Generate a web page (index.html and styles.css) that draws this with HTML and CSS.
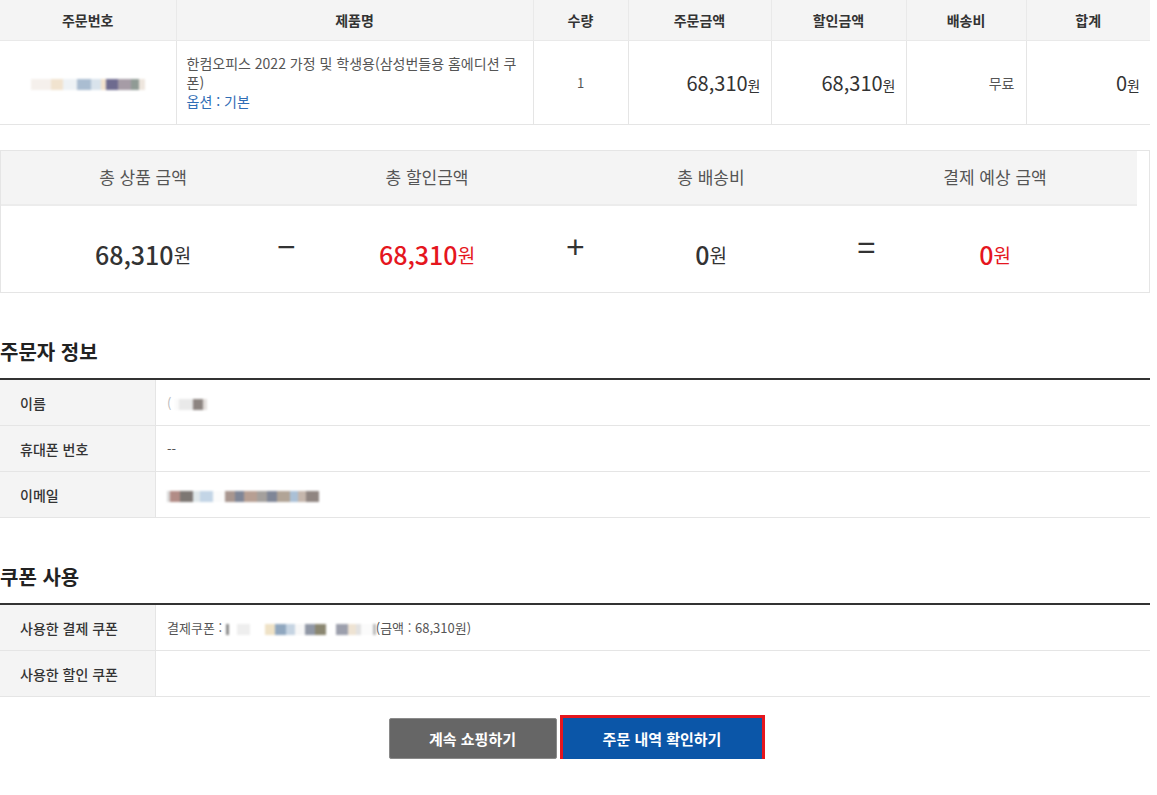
FILE: index.html
```html
<!DOCTYPE html>
<html lang="ko">
<head>
    <meta charset="UTF-8">
    <meta name="viewport" content="width=device-width, initial-scale=1.0">
    <title>주문 완료</title>
    <link rel="stylesheet" href="styles.css">
</head>
<body>
    <div class="wrap">
        <table class="order-table">
            <colgroup>
                <col style="width:176px">
                <col style="width:357px">
                <col style="width:95px">
                <col style="width:143px">
                <col style="width:135px">
                <col style="width:120px">
                <col>
            </colgroup>
            <thead>
                <tr>
                    <th>주문번호</th>
                    <th>제품명</th>
                    <th>수량</th>
                    <th>주문금액</th>
                    <th>할인금액</th>
                    <th>배송비</th>
                    <th>합계</th>
                </tr>
            </thead>
            <tbody>
                <tr>
                    <td class="ord-no">
                        <span class="mosaic"><i style="width:20px;background:#f5f0ec"></i><i style="width:12px;background:#f1e3cf"></i><i style="width:14px;background:#eef2f5"></i><i style="width:14px;background:#aabdd1"></i><i style="width:10px;background:#d9e3ec"></i><i style="width:5px;background:#f2e2cc"></i><i style="width:12px;background:#6e6b8f"></i><i style="width:13px;background:#a69ca6"></i><i style="width:8px;background:#909b95"></i><i style="width:6px;background:#eee6de"></i></span>
                    </td>
                    <td class="prd">
                        한컴오피스 2022 가정 및 학생용(삼성번들용 홈에디션 쿠폰)
                        <span class="opt">옵션 : 기본</span>
                    </td>
                    <td class="qty">1</td>
                    <td class="price">68,310<span class="won">원</span></td>
                    <td class="price">68,310<span class="won">원</span></td>
                    <td class="ship">무료</td>
                    <td class="price">0<span class="won">원</span></td>
                </tr>
            </tbody>
        </table>

        <div class="summary">
            <div class="sum-head">
                <div>총 상품 금액</div>
                <div>총 할인금액</div>
                <div>총 배송비</div>
                <div>결제 예상 금액</div>
            </div>
            <div class="sum-body">
                <div class="sum-val">68,310<span class="won">원</span></div>
                <div class="sum-val red"><span class="op op-minus">−</span>68,310<span class="won">원</span></div>
                <div class="sum-val"><span class="op op-plus">+</span>0<span class="won">원</span></div>
                <div class="sum-val red"><span class="op op-eq">=</span>0<span class="won">원</span></div>
            </div>
        </div>

        <h3 class="sec-title">주문자 정보</h3>
        <table class="info-table">
            <tr>
                <th>이름</th>
                <td><span class="faint">(</span> <span class="mosaic"><i style="width:4px;background:#fafafa"></i><i style="width:14px;background:#e9e9e9"></i><i style="width:10px;background:#8d8581"></i><i style="width:4px;background:#e4e0dd"></i></span></td>
            </tr>
            <tr>
                <th>휴대폰 번호</th>
                <td>--</td>
            </tr>
            <tr>
                <th>이메일</th>
                <td><span class="mosaic"><i style="width:3px;background:#d8d8d8"></i><i style="width:10px;background:#b28c86"></i><i style="width:13px;background:#7d7773"></i><i style="width:7px;background:#dfe7ea"></i><i style="width:13px;background:#c3d5e6"></i><i style="width:12px;background:#fbfbfb"></i><i style="width:10px;background:#a8968f"></i><i style="width:9px;background:#7f8697"></i><i style="width:13px;background:#b79f93"></i><i style="width:10px;background:#a4a09d"></i><i style="width:10px;background:#7f8697"></i><i style="width:13px;background:#b1a496"></i><i style="width:8px;background:#aac0d6"></i><i style="width:8px;background:#c5b6ac"></i><i style="width:13px;background:#908581"></i></span></td>
            </tr>
        </table>

        <h3 class="sec-title">쿠폰 사용</h3>
        <table class="info-table">
            <tr>
                <th>사용한 결제 쿠폰</th>
                <td>결제쿠폰 : <span class="mosaic"><i style="width:3px;background:#8a8a8a"></i><i style="width:8px;background:#fff"></i><i style="width:13px;background:#eeeeee"></i><i style="width:15px;background:#fff"></i><i style="width:10px;background:#efe2c6"></i><i style="width:11px;background:#90a7bf"></i><i style="width:9px;background:#c6d4e2"></i><i style="width:10px;background:#f7f7f7"></i><i style="width:10px;background:#9097a5"></i><i style="width:11px;background:#8b8771"></i><i style="width:10px;background:#fff"></i><i style="width:12px;background:#9c9fac"></i><i style="width:8px;background:#eee3d3"></i><i style="width:5px;background:#e2e2e2"></i><i style="width:12px;background:#fbfbfb"></i><i style="width:3px;background:#bbb"></i></span>(금액 : 68,310원)</td>
            </tr>
            <tr>
                <th>사용한 할인 쿠폰</th>
                <td></td>
            </tr>
        </table>

        <div class="btns">
            <button class="btn btn-gray">계속 쇼핑하기</button>
            <button class="btn btn-blue">주문 내역 확인하기</button>
        </div>
    </div>
</body>
</html>
```

FILE: styles.css
```css
body { margin: 0; background: #fff; font-family: "Noto Sans CJK KR", "Liberation Sans", sans-serif; color: #333; }
.wrap { width: 1150px; }

.order-table { width: 1150px; border-collapse: collapse; table-layout: fixed; }
.order-table th { height: 40px; padding: 0; background: #f4f4f4; font-size: 14px; font-weight: 700; color: #333; border-left: 1px solid #e9e9e9; border-bottom: 1px solid #e9e9e9; }
.order-table td { height: 83px; padding: 0 10px; border-left: 1px solid #e5e5e5; border-bottom: 1px solid #e5e5e5; font-size: 14px; color: #555; }
.order-table th:first-child, .order-table td:first-child { border-left: 0; }
.order-table .ord-no { text-align: center; padding: 0; }
.order-table .prd { padding: 0 12px 0 10px; font-size: 14px; line-height: 19px; color: #555; word-break: break-all; }
.opt { display: block; color: #2f6db5; }
.order-table .qty { text-align: center; font-size: 13px; }
.order-table .price { text-align: right; font-size: 20px; color: #333; }
.order-table .ship { text-align: right; font-size: 14px; padding-right: 11px; }
.won { font-size: 14px; }

.mosaic { display: inline-flex; vertical-align: middle; height: 11px; filter: blur(0.8px); }
.mosaic i { display: block; height: 100%; }
.faint { color: #bbb; }

.summary { margin-top: 25px; border: 1px solid #e5e5e5; padding-right: 12px; }
.sum-head { display: grid; grid-template-columns: repeat(4, 1fr); height: 53px; background: #f4f4f4; border-bottom: 2px solid #ececec; }
.sum-head div { display: flex; align-items: center; justify-content: center; font-size: 17px; color: #555; padding-bottom: 2px; }
.sum-body { display: grid; grid-template-columns: repeat(4, 1fr); height: 86px; }
.sum-val { position: relative; display: flex; align-items: center; justify-content: center; padding-top: 10px; font-size: 25px; font-weight: 500; color: #333; }
.sum-val .won { font-size: 19px; font-weight: 400; }
.sum-val.red { color: #e5161e; }
.op { position: absolute; top: 24px; font-family: "Liberation Sans", sans-serif; font-size: 32px; font-weight: 400; line-height: 34px; color: #333; }
.op-minus { left: -8px; }
.op-plus { left: -3px; }
.op-eq { left: 4px; }

.sec-title { margin: 46px 0 13px; font-size: 20px; font-weight: 700; line-height: 26px; color: #222; }
.info-table { width: 1150px; border-collapse: collapse; border-top: 2px solid #333; }
.info-table th { width: 135px; height: 45px; padding: 0 0 0 20px; background: #f4f4f4; text-align: left; font-size: 14px; font-weight: 500; color: #333; border-right: 1px solid #e5e5e5; border-bottom: 1px solid #e5e5e5; }
.info-table td { padding: 0 0 0 11px; font-size: 13px; color: #555; border-bottom: 1px solid #e5e5e5; }

.btns { display: flex; justify-content: center; gap: 6px; margin-top: 21px; }
.btn { height: 41px; border: 0; font-family: inherit; font-size: 15px; font-weight: 700; color: #fff; }
.btn-gray { width: 168px; background: #666; border: 1px solid #8a8a8a; border-radius: 2px; }
.btn-blue { width: 199px; background: #0b56a8; outline: 3px solid #e5161e; }
```
